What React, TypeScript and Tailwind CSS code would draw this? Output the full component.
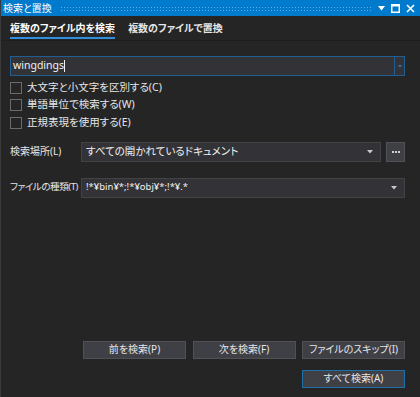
import React from 'react';

const font = "font-['Noto_Sans','Noto_Sans_CJK_JP',sans-serif] [font-feature-settings:'palt']";

function Caret({ className = '' }: { className?: string }) {
  return (
    <svg width="6" height="4" viewBox="0 0 6 4" className={className}>
      <path d="M0 0h6L3 3.5z" fill="#c8c8c8" />
    </svg>
  );
}

function Check({ label }: { label: string }) {
  return (
    <div className="flex items-center h-[17.5px]">
      <div className="w-[12px] h-[12px] border border-[#6b6b6b] bg-[#252526]" />
      <span className="ml-[5px] text-[10.5px] text-[#e6e6e6]">{label}</span>
    </div>
  );
}

function Select({ value, small }: { value: string; small?: boolean }) {
  return (
    <div className="flex-1 h-[20px] bg-[#333337] border border-[#434346] flex items-center pl-[4px] pr-[7px]">
      <span className={`flex-1 whitespace-nowrap text-[#f1f1f1] ${small ? 'text-[9.5px]' : 'text-[10.5px]'}`}>{value}</span>
      <Caret />
    </div>
  );
}

function Btn({ children, primary }: { children: React.ReactNode; primary?: boolean }) {
  return (
    <div
      className={`w-[103px] h-[18px] flex items-center justify-center text-[10px] text-[#e6e6e6] bg-[#3f3f46] border ${
        primary ? 'border-[#1d6fa8]' : 'border-[#505057]'
      }`}
    >
      {children}
    </div>
  );
}

export default function App() {
  return (
    <div className={`w-[420px] h-[397px] bg-[#252526] border-l border-[#3a3a3d] flex flex-col ${font}`}>
      {/* title bar */}
      <div className="h-[16px] bg-[#007acc] flex items-center pl-[2px] pr-[5px]">
        <span className="text-[10px] text-white leading-none">検索と置換</span>
        <div className="flex-1 h-[5px] ml-[8px] mr-[6px] bg-[radial-gradient(#5fb0ea_0.7px,transparent_0.8px)] bg-size-[3px_3px]" />
        <div className="flex items-center gap-[6px]">
          <svg width="7" height="5" viewBox="0 0 7 5">
            <path d="M0 0h7L3.5 4.5z" fill="#fff" />
          </svg>
          <svg width="9" height="9" viewBox="0 0 9 9">
            <rect x="0.75" y="0.75" width="7.5" height="7.5" fill="none" stroke="#fff" strokeWidth="1.5" />
            <rect x="0" y="0" width="9" height="2.5" fill="#fff" />
          </svg>
          <svg width="9" height="9" viewBox="0 0 9 9">
            <path d="M1 1l7 7M8 1L1 8" stroke="#fff" strokeWidth="1.6" />
          </svg>
        </div>
      </div>

      {/* tabs */}
      <div className="h-[25px] flex items-end pl-[9px] gap-[13px] border-b border-[#1e1e1e]">
        <div className="h-full flex flex-col justify-center relative">
          <span className="text-[10px] font-bold text-white">複数のファイル内を検索</span>
          <div className="absolute left-0 right-0 bottom-[1px] h-[2px] bg-[#2f8ee0]" />
        </div>
        <div className="h-full flex flex-col justify-center">
          <span className="text-[10px] font-bold text-[#e6e6e6]">複数のファイルで置換</span>
        </div>
      </div>

      <div className="flex flex-col pl-[9px] pr-[15px]">
        {/* search input */}
        <div className="mt-[15px] h-[20px] bg-[#333337] border border-[#1f5f92] flex items-stretch">
          <div className="flex-1 flex items-center pl-[2px]">
            <span className="text-[10.5px] text-[#f1f1f1]">wingdings</span>
            <span className="w-[1px] h-[12px] bg-[#f1f1f1]" />
          </div>
          <div className="w-[10px] border-l border-[#1f5f92] flex items-center justify-center">
            <svg width="4" height="3" viewBox="0 0 4 3">
              <path d="M0 0h4L2 2.5z" fill="#2e79b5" />
            </svg>
          </div>
        </div>

        {/* options */}
        <div className="mt-[3px] flex flex-col">
          <Check label="大文字と小文字を区別する(C)" />
          <Check label="単語単位で検索する(W)" />
          <Check label="正規表現を使用する(E)" />
        </div>

        {/* look in */}
        <div className="mt-[10px] flex items-center">
          <span className="w-[71px] shrink-0 whitespace-nowrap text-[10px] text-[#e6e6e6]">検索場所(L)</span>
          <Select value="すべての開かれているドキュメント" />
          <div className="ml-[5px] w-[19px] h-[20px] bg-[#3f3f46] border border-[#505057] flex items-center justify-center gap-[1px]">
            <span className="w-[2px] h-[2px] bg-[#d0d0d0]" />
            <span className="w-[2px] h-[2px] bg-[#d0d0d0]" />
            <span className="w-[2px] h-[2px] bg-[#d0d0d0]" />
          </div>
        </div>

        {/* file types */}
        <div className="mt-[16px] flex items-center">
          <span className="w-[71px] shrink-0 whitespace-nowrap text-[9.5px] tracking-[-0.4px] text-[#e6e6e6]">ファイルの種類(T)</span>
          <Select value="!*¥bin¥*;!*¥obj¥*;!*¥.*" small />
        </div>

        {/* buttons */}
        <div className="mt-[143px] flex justify-end gap-[6.5px]">
          <Btn>前を検索(P)</Btn>
          <Btn>次を検索(F)</Btn>
          <Btn>ファイルのスキップ(I)</Btn>
        </div>
        <div className="mt-[11px] flex justify-end">
          <Btn primary>すべて検索(A)</Btn>
        </div>
      </div>
    </div>
  );
}
